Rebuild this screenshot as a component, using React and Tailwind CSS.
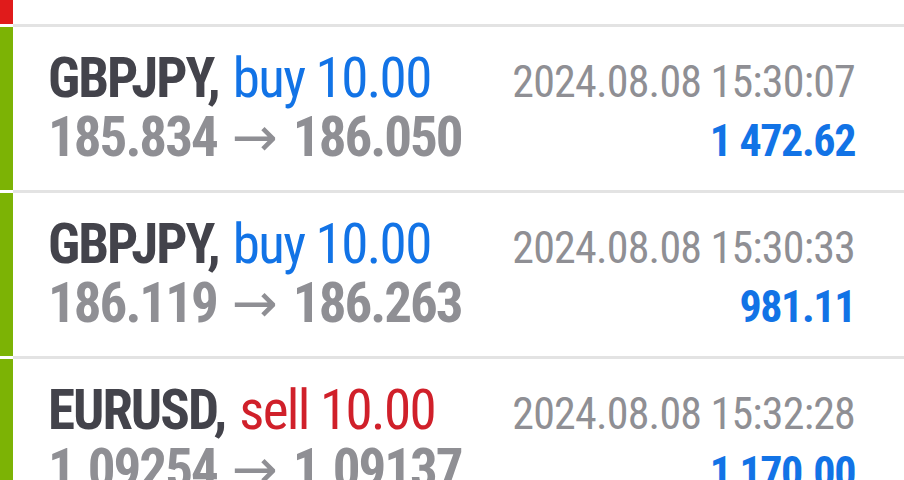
import React from 'react'

const trades = [
  { symbol: 'GBPJPY', side: 'buy', volume: '10.00', open: '185.834', close: '186.050', time: '2024.08.08 15:30:07', profit: '1 472.62' },
  { symbol: 'GBPJPY', side: 'buy', volume: '10.00', open: '186.119', close: '186.263', time: '2024.08.08 15:30:33', profit: '981.11' },
  { symbol: 'EURUSD', side: 'sell', volume: '10.00', open: '1.09254', close: '1.09137', time: '2024.08.08 15:32:28', profit: '1 170.00' },
]

function Separator() {
  return (
    <div className="flex h-[3px]">
      <div className="w-[13px] bg-white" />
      <div className="flex-1 bg-[#e3e3e3]" />
    </div>
  )
}

function TradeRow({ trade }) {
  const sideColor = trade.side === 'buy' ? 'text-[#1273e6]' : 'text-[#d0202a]'
  return (
    <div className="flex h-[163px]">
      <div className="w-[13px] bg-[#7cb305]" />
      <div className="flex-1 pl-[35px] pr-[49px] pt-[22px]">
        <div className="flex justify-between items-baseline h-[59px] leading-[59px]">
          <span className="text-[55px] whitespace-nowrap">
            <span className="font-bold text-[#43434b] tracking-[-2px]">{trade.symbol},</span>
            <span className={`${sideColor} tracking-[-1.6px] ml-[14px]`}>{trade.side} {trade.volume}</span>
          </span>
          <span className="text-[44px] text-[#8f8f94] tracking-[-0.8px] whitespace-nowrap">{trade.time}</span>
        </div>
        <div className="flex justify-between items-baseline h-[59px] leading-[59px]">
          <span className="text-[55px] font-bold text-[#8f8f94] tracking-[-2px] whitespace-nowrap">
            {trade.open}
            <span className="font-normal font-['DejaVu_Sans',sans-serif] [font-stretch:normal] tracking-normal mx-[15px]">→</span>
            {trade.close}
          </span>
          <span className="text-[44px] font-bold text-[#1273e6] tracking-[-1.4px] whitespace-nowrap">{trade.profit}</span>
        </div>
      </div>
    </div>
  )
}

export default function App() {
  return (
    <div className="w-[904px] h-[480px] overflow-hidden bg-white font-['Roboto',sans-serif] [font-stretch:condensed]">
      <div className="flex h-[24px]">
        <div className="w-[13px] bg-[#e01b1b]" />
        <div className="flex-1" />
      </div>
      {trades.map((t, i) => (
        <React.Fragment key={i}>
          <Separator />
          <TradeRow trade={t} />
        </React.Fragment>
      ))}
    </div>
  )
}
